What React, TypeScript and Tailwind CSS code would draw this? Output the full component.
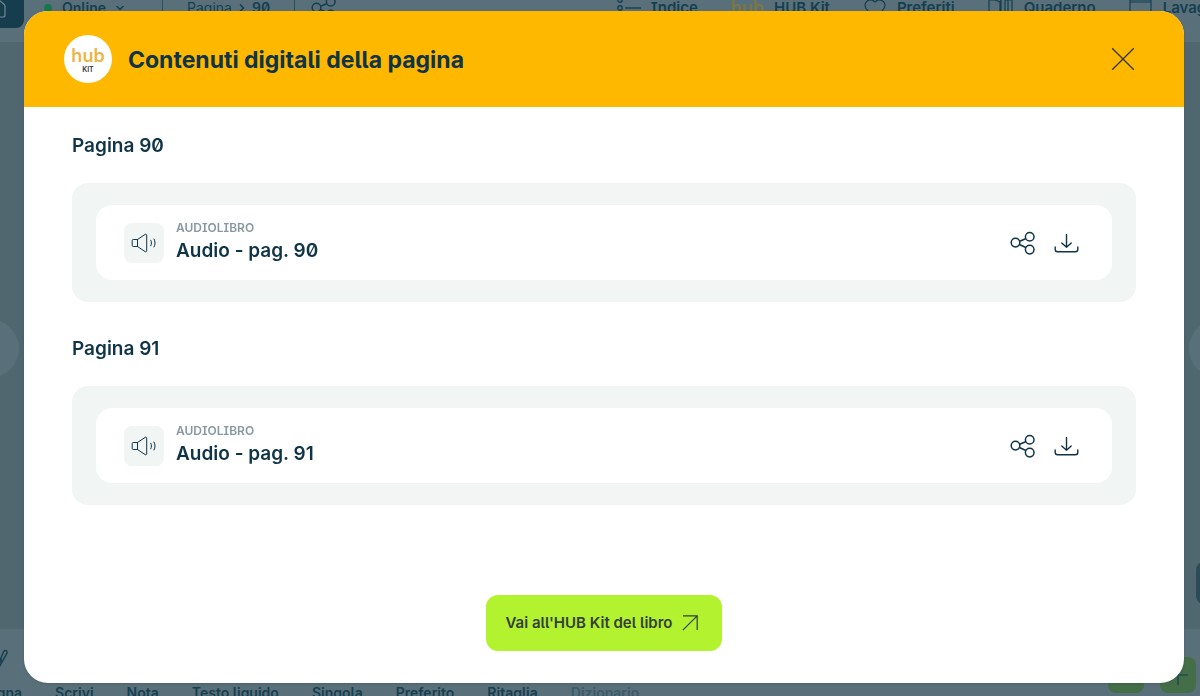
import type { ReactNode } from "react"
import { ChevronDown, ChevronRight, Heart, House } from "lucide-react"

interface PageContent {
  page: number
  kind: string
  title: string
}

const contents: PageContent[] = [
  { page: 90, kind: "AUDIOLIBRO", title: "Audio - pag. 90" },
  { page: 91, kind: "AUDIOLIBRO", title: "Audio - pag. 91" },
]

const tools = ["Disegna", "Scrivi", "Nota", "Testo liquido", "Singola", "Preferito", "Ritaglia"]

function ShareIcon({ className }: { className?: string }) {
  return (
    <svg viewBox="0 0 26 26" fill="none" stroke="currentColor" strokeWidth="1.5" className={className}>
      <circle cx="5.5" cy="12.6" r="4.3" />
      <circle cx="19.7" cy="6.8" r="4.3" />
      <circle cx="19.7" cy="19.6" r="4.3" />
      <path d="M9.6 11.3 15.6 8.8M9.4 14.5l6.4 3" />
    </svg>
  )
}

function DownloadIcon({ className }: { className?: string }) {
  return (
    <svg
      viewBox="0 0 26 26"
      fill="none"
      stroke="currentColor"
      strokeWidth="1.4"
      strokeLinecap="round"
      strokeLinejoin="round"
      className={className}
    >
      <path d="M12.5 4.5v12.8M7.8 13l4.7 4.3 4.7-4.3" />
      <path d="M1.2 17v2.2c0 1.6.8 2.5 2.4 2.5h17.8c1.6 0 2.4-.9 2.4-2.5V17" />
    </svg>
  )
}

function SpeakerIcon({ className }: { className?: string }) {
  return (
    <svg viewBox="0 0 26 20" fill="none" stroke="currentColor" strokeWidth="1" strokeLinejoin="round" className={className}>
      <path d="M6.5 6.5H2.2c-.6 0-1 .4-1 1v5c0 .6.4 1 1 1h4.3zM6.5 6.5l7.6-5.1c.8-.5 1.6-.1 1.6.8v15.6c0 .9-.8 1.3-1.6.8l-7.6-5.1z" />
      <path d="M19.8 7.2c.9 1.8.9 3.8 0 5.6M23 6c1.4 2.5 1.4 5.5 0 8" strokeLinecap="round" />
    </svg>
  )
}

function HeaderLink({ icon, label }: { icon: ReactNode; label: string }) {
  return (
    <a href="#" className="flex shrink-0 items-center gap-2.5">
      {icon}
      {label}
    </a>
  )
}

function Reader() {
  return (
    <div className="flex h-full flex-col bg-[#506770] text-sm font-semibold text-[#153f50]">
      <header className="flex h-[42px] items-start overflow-hidden bg-[#596f7a] leading-4">
        <button aria-label="Home" className="h-7 w-6 shrink-0 overflow-hidden rounded-br-lg bg-[#153d4e] text-[#6f8791]">
          <House className="-ml-4 -mt-3 size-6" strokeWidth={1.2} />
        </button>
        <div className="flex shrink-0 items-center pl-5">
          <span className="mr-2.5 size-2 rounded-full bg-[#177551]" />
          <span>Online</span>
          <ChevronDown className="ml-2 size-3" strokeWidth={3} />
          <span className="ml-9 h-4 w-px bg-[#2a5060]" />
          <span className="ml-6 font-normal">Pagina</span>
          <ChevronRight className="mx-1 size-3" strokeWidth={3.5} />
          <span>90</span>
          <span className="ml-6 h-4 w-px bg-[#2a5060]" />
          <ShareIcon className="-my-2 ml-4 size-[26px]" />
        </div>
        <nav className="-mr-6 ml-auto flex items-center gap-[33px] text-[15px] leading-4">
          <HeaderLink
            label="Indice"
            icon={
              <svg viewBox="0 0 24 16" fill="none" stroke="currentColor" strokeWidth="1.4" className="h-4 w-6">
                <circle cx="3" cy="0" r="2.2" />
                <circle cx="3" cy="8" r="2.2" />
                <path d="M8 8h16" />
              </svg>
            }
          />
          <HeaderLink label="HUB Kit" icon={<span className="text-lg leading-4 text-[#7c7743]">hub</span>} />
          <HeaderLink label="Preferiti" icon={<Heart className="-my-2 size-6" strokeWidth={1.2} />} />
          <HeaderLink
            label="Quaderno"
            icon={
              <svg viewBox="0 0 26 24" fill="none" stroke="currentColor" strokeWidth="1.2" className="-my-2 h-6 w-[26px]">
                <path d="M1 4v16h11V6L7 4zM12 6l1-2v16M17 4v16h7V4zM20 4v16" />
              </svg>
            }
          />
          <HeaderLink
            label="Lavagna"
            icon={
              <svg viewBox="0 0 24 24" fill="none" stroke="currentColor" strokeWidth="1.2" className="-my-2 size-6">
                <path d="M1 4h21v16H1zM1 6h21" />
              </svg>
            }
          />
        </nav>
      </header>

      <main className="relative flex-1 overflow-hidden">
        <button aria-label="Pagina precedente" className="absolute -left-10 top-[277px] size-[59px] rounded-full bg-[#596f7a]" />
        <button aria-label="Pagina successiva" className="absolute -right-12 top-[277px] size-[59px] rounded-full bg-[#596f7a]" />
        <button aria-label="Strumenti" className="absolute -right-9 top-[520px] h-[42px] w-10 rounded-lg bg-[#2b4b58]" />
      </main>

      <footer className="flex h-[67px] items-start justify-between overflow-hidden bg-[#596f7a] pr-1">
        <div className="-ml-[33px]">
          <svg viewBox="0 0 20 20" fill="none" stroke="currentColor" strokeWidth="1.4" className="ml-[21px] mt-5 size-5">
            <path d="M10 16 15.5 3c.6-1.3 1.6-1.7 2.6-1.3 1 .5 1.2 1.5.7 2.7L13 15l-2.5 4M13 15V9" />
          </svg>
          <div className="mt-4 flex gap-[33px] whitespace-nowrap leading-4">
            {tools.map((tool) => (
              <button key={tool}>{tool}</button>
            ))}
            <button disabled className="text-[#395b6a]">
              Dizionario
            </button>
          </div>
        </div>
        <div className="flex shrink-0 gap-4 pt-7">
          <button aria-label="Riduci" className="size-9 rounded-lg bg-[#436e48]" />
          <button aria-label="Aggiungi" className="size-9 rounded-lg bg-[#436e48]">
            <svg viewBox="0 0 36 36" stroke="currentColor" strokeWidth="1.2">
              <path d="M18 8v20M8 18h20" />
            </svg>
          </button>
        </div>
      </footer>
    </div>
  )
}

function ContentSection({ item }: { item: PageContent }) {
  return (
    <section>
      <h2 className="text-[19px] font-semibold leading-[30px]">Pagina {item.page}</h2>
      <div className="mt-[22px] rounded-2xl bg-[#f1f5f4] px-6 py-[22px]">
        <div className="flex items-center rounded-2xl bg-white pb-[14px] pl-7 pr-8 pt-[15px]">
          <div className="flex size-10 items-center justify-center rounded-lg bg-[#f1f5f4]">
            <SpeakerIcon className="h-5 w-[26px]" />
          </div>
          <div className="ml-3">
            <p className="text-xs font-semibold leading-4 text-[#8798a1]">{item.kind}</p>
            <h3 className="text-[19px] font-semibold leading-[30px]">{item.title}</h3>
          </div>
          <div className="ml-auto flex gap-[18px]">
            <button aria-label="Condividi">
              <ShareIcon className="size-[26px]" />
            </button>
            <button aria-label="Scarica">
              <DownloadIcon className="size-[26px]" />
            </button>
          </div>
        </div>
      </div>
    </section>
  )
}

export default function App() {
  return (
    <div className="h-screen overflow-hidden font-['Inter',sans-serif] [font-feature-settings:'zero','cv05','cv08']">
      <Reader />

      {/* Modal */}
      <div className="fixed inset-0 flex pb-[13px] pl-6 pr-4 pt-[11px]">
        <div
          role="dialog"
          aria-labelledby="modal-title"
          className="flex flex-1 flex-col overflow-hidden rounded-3xl bg-white text-[#0f3447] shadow-sm"
        >
          <header className="flex h-24 shrink-0 items-center bg-[#ffb800] pl-10 pr-12">
            <div className="flex size-12 flex-col items-center justify-center rounded-full bg-white pt-0.5 [font-feature-settings:normal]">
              <span className="text-lg font-semibold leading-5 text-[#ebb548]">hub</span>
              <span className="text-[7px] font-semibold leading-2 text-[#333333]">KIT</span>
            </div>
            <h1 id="modal-title" className="ml-4 pt-0.5 text-[23px] font-bold leading-8">
              Contenuti digitali della pagina
            </h1>
            <button aria-label="Chiudi" className="ml-auto">
              <svg viewBox="0 0 26 26" stroke="#333333" strokeWidth="1.3" className="size-[26px]">
                <path d="M2.2 2.2l21.6 21.6M23.8 2.2 2.2 23.8" />
              </svg>
            </button>
          </header>

          <div className="flex flex-1 flex-col gap-8 px-12 pt-6">
            {contents.map((item) => (
              <ContentSection key={item.page} item={item} />
            ))}
          </div>

          <footer className="flex justify-center pb-8">
            <a
              href="#"
              className="flex h-14 items-center gap-2.5 rounded-xl bg-[#b2f22e] pl-5 pr-6 text-[15px] font-semibold text-[#333f3a]"
            >
              Vai all'HUB Kit del libro
              <svg viewBox="0 0 16 16" fill="none" stroke="currentColor" strokeWidth="1.2" className="size-4">
                <path d="M1 .8h14.2V15M15.2.8.8 15.2" />
              </svg>
            </a>
          </footer>
        </div>
      </div>
    </div>
  )
}
